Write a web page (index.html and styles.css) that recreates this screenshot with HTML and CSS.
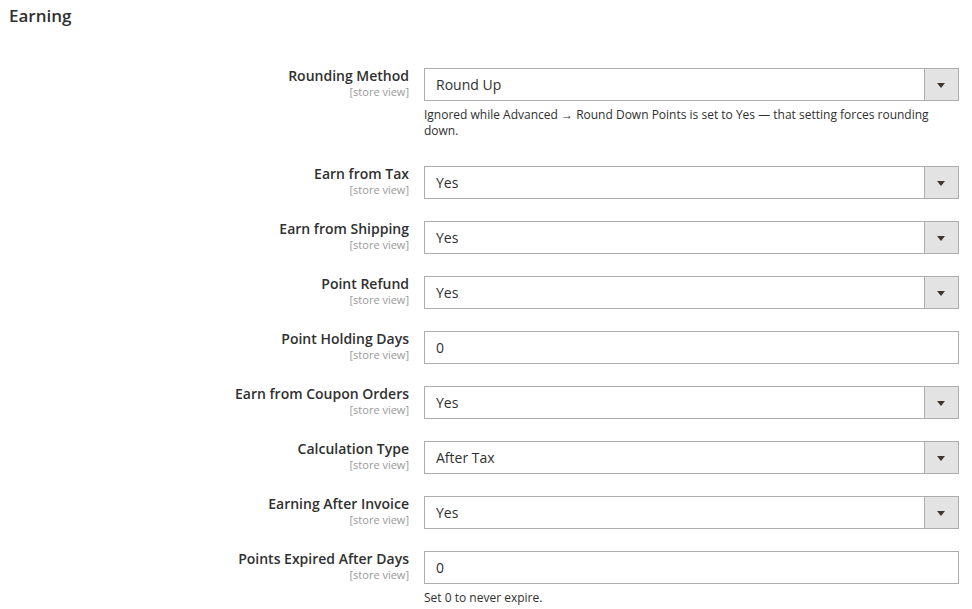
FILE: index.html
```html
<!DOCTYPE html>
<html lang="en">
<head>
    <meta charset="UTF-8">
    <meta name="viewport" content="width=device-width, initial-scale=1.0">
    <title>Earning</title>
    <link rel="stylesheet" href="styles.css">
</head>
<body>
    <h2 class="section-title">Earning</h2>

    <div class="fieldset">
        <div class="field">
            <label class="label">Rounding Method<span class="scope">[store view]</span></label>
            <div class="control">
                <div class="select-wrap">
                    <select><option>Round Up</option><option>Round Down</option></select>
                </div>
                <p class="note">Ignored while Advanced &rarr; Round Down Points is set to Yes &mdash; that setting forces rounding down.</p>
            </div>
        </div>

        <div class="field">
            <label class="label">Earn from Tax<span class="scope">[store view]</span></label>
            <div class="control">
                <div class="select-wrap">
                    <select><option>Yes</option><option>No</option></select>
                </div>
            </div>
        </div>

        <div class="field">
            <label class="label">Earn from Shipping<span class="scope">[store view]</span></label>
            <div class="control">
                <div class="select-wrap">
                    <select><option>Yes</option><option>No</option></select>
                </div>
            </div>
        </div>

        <div class="field">
            <label class="label">Point Refund<span class="scope">[store view]</span></label>
            <div class="control">
                <div class="select-wrap">
                    <select><option>Yes</option><option>No</option></select>
                </div>
            </div>
        </div>

        <div class="field">
            <label class="label">Point Holding Days<span class="scope">[store view]</span></label>
            <div class="control">
                <input type="text" value="0">
            </div>
        </div>

        <div class="field">
            <label class="label">Earn from Coupon Orders<span class="scope">[store view]</span></label>
            <div class="control">
                <div class="select-wrap">
                    <select><option>Yes</option><option>No</option></select>
                </div>
            </div>
        </div>

        <div class="field">
            <label class="label">Calculation Type<span class="scope">[store view]</span></label>
            <div class="control">
                <div class="select-wrap">
                    <select><option>After Tax</option><option>Before Tax</option></select>
                </div>
            </div>
        </div>

        <div class="field">
            <label class="label">Earning After Invoice<span class="scope">[store view]</span></label>
            <div class="control">
                <div class="select-wrap">
                    <select><option>Yes</option><option>No</option></select>
                </div>
            </div>
        </div>

        <div class="field">
            <label class="label">Points Expired After Days<span class="scope">[store view]</span></label>
            <div class="control">
                <input type="text" value="0">
                <p class="note">Set 0 to never expire.</p>
            </div>
        </div>
    </div>
</body>
</html>
```

FILE: styles.css
```css
body {
    margin: 0;
    font-family: "Open Sans", "Liberation Sans", sans-serif;
    color: #303030;
    background: #fff;
}

.section-title {
    margin: 6px 0 42px;
    padding: 0 9px;
    font-size: 17px;
    font-weight: 600;
    line-height: 20px;
    color: #303030;
}

.field {
    display: grid;
    grid-template-columns: 409px 535px;
    column-gap: 15px;
    margin-bottom: 22px;
}

.label {
    text-align: right;
    font-size: 14px;
    font-weight: 600;
    line-height: 1.2;
}

.scope {
    display: block;
    font-size: 11px;
    font-weight: 400;
    line-height: 1.2;
    color: #999;
}

.control input,
.control select {
    display: block;
    box-sizing: border-box;
    width: 100%;
    height: 33px;
    margin: 0;
    padding: 0 11px;
    border: 1px solid #adadad;
    border-radius: 0;
    background: #fff;
    font-family: inherit;
    font-size: 14px;
    color: #303030;
    outline: none;
}

.select-wrap {
    position: relative;
}

.select-wrap select {
    appearance: none;
    -webkit-appearance: none;
    padding-right: 44px;
}

/* grey button with the arrow on the right of each select */
.select-wrap::before {
    content: "";
    position: absolute;
    top: 1px;
    right: 1px;
    bottom: 1px;
    width: 33px;
    background: #e3e3e3;
    border-left: 1px solid #adadad;
    pointer-events: none;
}

.select-wrap::after {
    content: "";
    position: absolute;
    top: 15px;
    right: 14px;
    border-left: 4px solid transparent;
    border-right: 4px solid transparent;
    border-top: 5px solid #41362f;
    pointer-events: none;
}

.note {
    margin: 6px 0 5px;
    font-size: 12px;
    line-height: 16px;
    color: #303030;
}
```
